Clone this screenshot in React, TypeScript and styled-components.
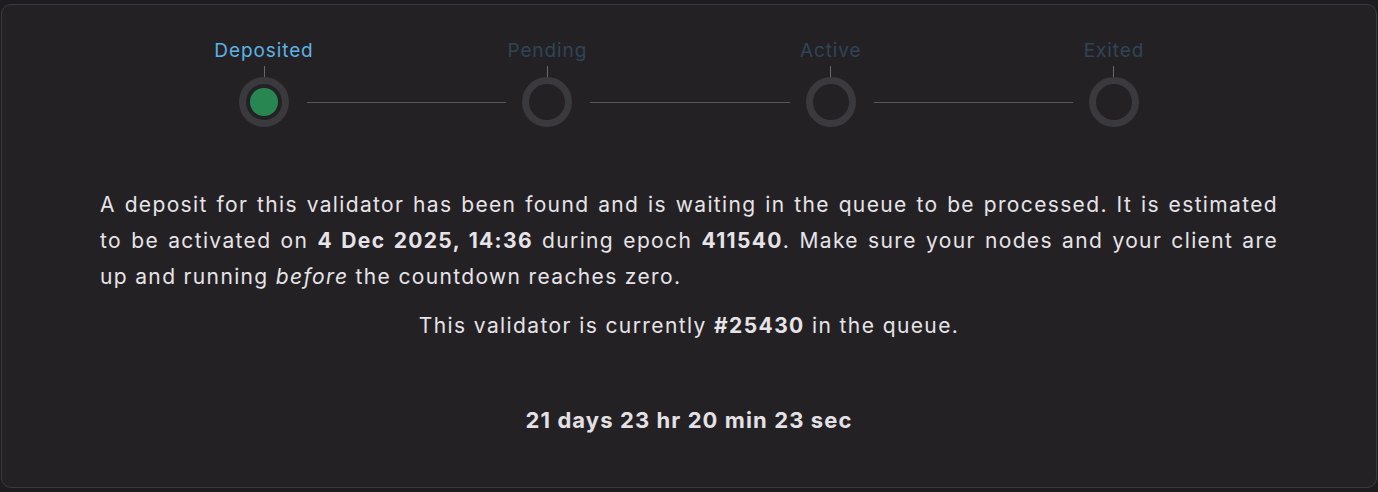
import styled, { createGlobalStyle } from "styled-components"

const Global = createGlobalStyle`
    body {
        margin: 0;
        background-color: #1e1c20;
        font-family: Inter, "Noto Sans", sans-serif;
    }
`

const Page = styled.div`
    padding: 4px 1px 4px 1px;
    height: 492px;
    box-sizing: border-box;
`

const Card = styled.div`
    height: 100%;
    box-sizing: border-box;
    background-color: #242125;
    border: 1px solid #3b393e;
    border-radius: 10px;
    padding: 30px 98px 0;
    color: #e6e4e8;
`

const Steps = styled.div`
    width: 900px;
    margin: 0 auto;
    display: flex;
    align-items: flex-end;
`

const Step = styled.div`
    width: 50px;
    display: flex;
    flex-direction: column;
    align-items: center;
`

const Label = styled.div<{ $active?: boolean }>`
    white-space: nowrap;
    font-size: 19px;
    letter-spacing: 0.9px;
    line-height: 30px;
    margin-top: 1px;
    color: ${p => (p.$active ? "#5cb3e4" : "#2f4556")};
`

const Tick = styled.div`
    width: 1px;
    height: 11px;
    background-color: #6a686d;
`

const Ring = styled.div`
    width: 50px;
    height: 50px;
    box-sizing: border-box;
    border-radius: 50%;
    border: 7px solid #3a393e;
    display: flex;
    align-items: center;
    justify-content: center;
`

const Dot = styled.div`
    width: 28px;
    height: 28px;
    border-radius: 50%;
    background-color: #288750;
`

const Connector = styled.div`
    flex: 1;
    height: 1px;
    margin: 0 16px 24px 18px;
    background-color: #58565b;
`

const Message = styled.div`
    margin-top: 60px;
    font-size: 21px;
    line-height: 36px;
    letter-spacing: 1.35px;
`

const Line = styled.div<{ $justify?: boolean }>`
    white-space: nowrap;
    text-align: ${p => (p.$justify ? "justify" : "left")};
    text-align-last: ${p => (p.$justify ? "justify" : "left")};
`

const Queue = styled.p`
    margin: 13px 0 0;
    text-align: center;
    font-size: 21px;
    line-height: 36px;
    letter-spacing: 1.4px;
`

const Countdown = styled.div`
    margin-top: 61px;
    text-align: center;
    font-size: 22px;
    font-weight: 700;
    line-height: 30px;
    letter-spacing: 1.1px;
    color: #e3e1e5;
`

const steps = ["Deposited", "Pending", "Active", "Exited"]

export default function App() {
    return <Page>
        <Global />
        <Card>
            <Steps>
                {steps.map((s, i) => <>
                    {i > 0 && <Connector key={s + "-line"} />}
                    <Step key={s}>
                        <Label $active={i === 0}>{s}</Label>
                        <Tick />
                        <Ring>{i === 0 && <Dot />}</Ring>
                    </Step>
                </>)}
            </Steps>
            <Message>
                <Line $justify>A deposit for this validator has been found and is waiting in the queue to be processed. It is estimated</Line>
                <Line $justify>to be activated on <b>4 Dec 2025, 14:36</b> during epoch <b>411540</b>. Make sure your nodes and your client are</Line>
                <Line>up and running <i>before</i> the countdown reaches zero.</Line>
            </Message>
            <Queue>This validator is currently <b>#25430</b> in the queue.</Queue>
            <Countdown>21 days 23 hr 20 min 23 sec</Countdown>
        </Card>
    </Page>
}
